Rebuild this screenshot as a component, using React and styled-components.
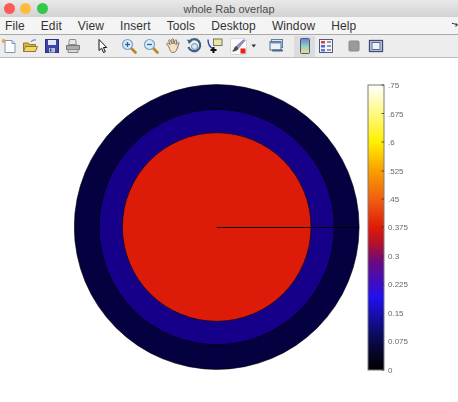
import React from 'react'
import styled, { createGlobalStyle } from 'styled-components';

const GlobalStyle = createGlobalStyle`
  html, body { margin: 0; padding: 0; background: #fff; }
  body { font-family: "Liberation Sans", Arial, sans-serif; }
  * { box-sizing: border-box; }
`;

const Window = styled.div`
  width: 458px;
  height: 402px;
  display: flex;
  flex-direction: column;
  overflow: hidden;
  background: #fff;
`;

const TitleBar = styled.div`
  height: 17px;
  flex: none;
  display: flex;
  align-items: center;
  position: relative;
  background: linear-gradient(#e9e9e9, #d2d2d2);
`;

const Lights = styled.div`
  display: flex;
  gap: 5.5px;
  padding-left: 3.5px;
`;

const Light = styled.span`
  width: 11px;
  height: 11px;
  border-radius: 50%;
  background: ${(p) => p.$color};
`;

const Title = styled.div`
  position: absolute;
  left: 0;
  right: 0;
  text-align: center;
  font-size: 11px;
  color: #4c4c4c;
`;

const MenuBar = styled.div`
  height: 18px;
  flex: none;
  display: flex;
  align-items: center;
  gap: 16px;
  padding-left: 5px;
  position: relative;
  background: #f4f4f4;
  border-bottom: 1px solid #a9a9a9;
  font-size: 12px;
  color: #333;
`;

const MenuItem = styled.span`
  letter-spacing: 0.1px;
`;

const MenuArrow = styled.svg`
  position: absolute;
  right: 0;
  top: 5px;
`;

const Toolbar = styled.div`
  height: 23px;
  flex: none;
  display: flex;
  align-items: center;
  background: #ededed;
  border-bottom: 1px solid #bdbdbd;
`;

const ToolButton = styled.div`
  flex: none;
  width: ${(p) => p.$width || 21}px;
  height: 21px;
  margin-left: ${(p) => p.$ml || 0}px;
  display: flex;
  align-items: center;
  justify-content: center;
  background: ${(p) => (p.$active ? '#dcdcdc' : 'transparent')};
  svg { filter: blur(0.3px); }
`;

const Figure = styled.div`
  flex: 1;
  background: #fff;
`;

const Canvas = styled.svg`
  display: block;
  filter: blur(0.25px);
`;

const Icon = ({ children, w = 16, h = 16 }) => (
    <svg width={w} height={h} viewBox={`0 0 ${w} ${h}`}>{children}</svg>
)

const NewIcon = () => (
    <Icon>
        <path d="M4 2.500h7l3 3v9H4z" fill="#fff" stroke="#7d97b8" />
        <path d="M11 2.500v3h3" fill="#dfe8f2" stroke="#7d97b8" />
        <circle cx="2.600" cy="3" r="2" fill="#f0a050" />
    </Icon>
)

const OpenIcon = () => (
    <Icon>
        <path d="M1.500 5h5l1 1.500h6v7h-12z" fill="#d9b23c" stroke="#8c7a35" />
        <path d="M1.500 13.500l2-5h12l-2 5z" fill="#f4d664" stroke="#8c7a35" />
        <path d="M9 4c1-2 3-2.500 5-2" fill="none" stroke="#6d8fb5" strokeWidth="1.200" />
    </Icon>
)

const SaveIcon = () => (
    <Icon>
        <rect x="1.500" y="1.500" width="13" height="13" fill="#3c46a8" stroke="#2a3080" />
        <rect x="4" y="2" width="8" height="5" fill="#e4e8f4" />
        <rect x="5" y="10" width="6" height="4.500" fill="#b8bdd8" />
        <rect x="6" y="10.500" width="1.500" height="3" fill="#3c46a8" />
    </Icon>
)

const PrintIcon = () => (
    <Icon>
        <path d="M4.500 1.500h6l1 5h-8z" fill="#e8e8e8" stroke="#8d8d8d" />
        <path d="M1.500 7.500h13v4h-13z" fill="#a9adb0" stroke="#777" />
        <path d="M3 11.500h10v3H3z" fill="#d8d8d8" stroke="#888" />
    </Icon>
)

const PointerIcon = () => (
    <Icon>
        <path d="M5 1.500v11l2.600-2.300 1.900 4.300 1.800-.8-1.900-4.200h3.300z" fill="#fff" stroke="#111" strokeLinejoin="round" />
    </Icon>
)

const ZoomIcon = ({ minus }) => (
    <Icon>
        <path d="M9.500 9.500l5 5" stroke="#b98a1e" strokeWidth="2.600" strokeLinecap="round" />
        <circle cx="6.500" cy="6.500" r="5" fill="#d9ecfa" stroke="#7ea2c4" strokeWidth="1.200" />
        <path d="M4 6.500h5" stroke="#2f5fa8" strokeWidth="1.300" />
        {!minus && <path d="M6.500 4v5" stroke="#2f5fa8" strokeWidth="1.300" />}
    </Icon>
)

const HandIcon = () => (
    <Icon>
        <path
            d="M4 9L2 6.500c-.8-1 .5-2 1.500-1.200L5 6.800 3.800 3c-.3-1.300 1.300-1.700 1.800-.5L7 6 6.800 1.800c0-1.300 1.700-1.300 1.800 0L9 6l1-3.500c.4-1.200 1.900-.8 1.700.4L11 6.800l1.500-2c.8-1 2-.2 1.400 1L12 11c-.6 2-1.800 3.500-4 3.500-2 0-3-1.500-4-5.500z"
            fill="#f6e0c0"
            stroke="#7a7468"
            strokeLinejoin="round"
        />
    </Icon>
)

const RotateIcon = () => (
    <Icon>
        <path d="M3.500 3.500A6 6 0 1 1 2.500 9" fill="none" stroke="#3f5f86" strokeWidth="2.200" />
        <path d="M1 1.500l5.500 1-3.500 3.500z" fill="#3f5f86" />
        <circle cx="8.500" cy="8.500" r="3" fill="#dbe5ef" stroke="#6f8aa8" />
    </Icon>
)

const CursorIcon = () => (
    <Icon>
        <rect x="6.500" y="1" width="8.500" height="6.500" fill="#e8e7a8" stroke="#77775a" />
        <path d="M1 1.500c0 5 2 8 5.500 9.500" fill="none" stroke="#2430b8" strokeWidth="1.300" />
        <path d="M6.500 9v6M3.500 12h6" stroke="#111" strokeWidth="2" />
    </Icon>
)

const BrushIcon = () => (
    <Icon w={17} h={17}>
        <rect x="0.500" y="0.500" width="16" height="16" rx="1.500" fill="#fbfbfb" stroke="#d8d8d8" />
        <path d="M14 1.500L7 7.500l2 2 6-7z" fill="#9a93c8" stroke="#57528a" strokeWidth="0.600" />
        <path d="M6.500 8c-2.500.5-2 3-4.500 5.500 3 .5 6-1 6.800-3.500z" fill="#4d4d4d" />
        <rect x="10.500" y="10.500" width="5" height="5" fill="#ee1c1c" />
    </Icon>
)

const ArrowIcon = () => (
    <Icon w={6} h={4}>
        <path d="M.5 .5h4.500L2.750 3.500z" fill="#333" />
    </Icon>
)

const LinkIcon = () => (
    <Icon>
        <rect x="2.500" y="1.500" width="11" height="8" fill="#dfe6ee" stroke="#5f7da0" />
        <rect x="1" y="3.500" width="11" height="8.500" fill="#eef2f6" stroke="#4f6f95" />
        <rect x="1" y="3.500" width="11" height="2" fill="#6c8db3" />
        <path d="M4 12.500h4M9 12.500h4" stroke="#46678e" strokeWidth="2.200" strokeLinecap="round" />
    </Icon>
)

const ColorbarIcon = () => (
    <Icon>
        <defs>
            <linearGradient id="barIcon" x1="0" y1="0" x2="0" y2="1">
                <stop offset="0" stopColor="#6f7bd8" />
                <stop offset="0.500" stopColor="#8fd0c0" />
                <stop offset="1" stopColor="#f4e080" />
            </linearGradient>
        </defs>
        <rect x="3.500" y="0.500" width="9" height="15" rx="1" fill="url(#barIcon)" stroke="#49597c" />
    </Icon>
)

const LegendIcon = () => (
    <Icon>
        <rect x="1.500" y="1.500" width="13" height="13" fill="#f6f6fa" stroke="#4d5a80" />
        <rect x="3" y="3" width="4" height="2.500" fill="#e0383c" />
        <rect x="3" y="7" width="4" height="2.500" fill="#4f5fe0" />
        <rect x="3" y="11" width="4" height="2.500" fill="#5f6fe8" />
        <path d="M9 4h4M9 8h4M9 12h4" stroke="#333c5a" />
    </Icon>
)

const HideIcon = () => (
    <Icon>
        <rect x="3" y="3" width="10" height="10" rx="1" fill="#9a9a9a" stroke="#8a8a8a" />
    </Icon>
)

const ShowIcon = () => (
    <Icon>
        <rect x="1.500" y="2.500" width="13" height="11" fill="#c7d0ea" stroke="#3d4c74" strokeWidth="1.300" />
        <rect x="4" y="4.500" width="8" height="7" fill="#eef1f8" stroke="#5a6a90" />
    </Icon>
)

const menus = ['File', 'Edit', 'View', 'Insert', 'Tools', 'Desktop', 'Window', 'Help'];

const tools = [
    { icon: <NewIcon />, ml: -2 },
    { icon: <OpenIcon /> },
    { icon: <SaveIcon />, ml: 1 },
    { icon: <PrintIcon /> },
    { icon: <PointerIcon />, ml: 8.5 },
    { icon: <ZoomIcon />, ml: 6 },
    { icon: <ZoomIcon minus />, ml: 1 },
    { icon: <HandIcon />, ml: 0.5 },
    { icon: <RotateIcon />, ml: 0.5 },
    { icon: <CursorIcon /> },
    { icon: <BrushIcon />, ml: 2 },
    { icon: <ArrowIcon />, ml: 2, width: 6 },
    { icon: <LinkIcon />, ml: 9.5 },
    { icon: <ColorbarIcon />, ml: 7, active: true },
    { icon: <LegendIcon />, ml: 0.5 },
    { icon: <HideIcon />, ml: 7 },
    { icon: <ShowIcon />, ml: 0.5 },
];

// y values are page rows minus the 58px of chrome above the figure
const ticks = [
    { label: '.75', y: 27 },
    { label: '.675', y: 55.5 },
    { label: '.6', y: 84 },
    { label: '.525', y: 113 },
    { label: '.45', y: 141 },
    { label: '0.375', y: 169 },
    { label: '0.3', y: 198 },
    { label: '0.225', y: 226 },
    { label: '0.15', y: 255 },
    { label: '0.075', y: 283 },
    { label: '0', y: 312 },
];

function Plot() {
    return (
        <Canvas width="458" height="344" viewBox="0 0 458 344">
            <defs>
                <linearGradient id="hot" x1="0" y1="0" x2="0" y2="1">
                    <stop offset="0" stopColor="#ffffff" />
                    <stop offset="0.2" stopColor="#fff000" />
                    <stop offset="0.3" stopColor="#f8a000" />
                    <stop offset="0.4" stopColor="#f06010" />
                    <stop offset="0.5" stopColor="#e01a08" />
                    <stop offset="0.56" stopColor="#b01030" />
                    <stop offset="0.62" stopColor="#6a0a80" />
                    <stop offset="0.745" stopColor="#2010f0" />
                    <stop offset="0.89" stopColor="#0a0a50" />
                    <stop offset="1" stopColor="#000000" />
                </linearGradient>
            </defs>
            <circle cx="216.7" cy="169" r="142.400" fill="#05003f" stroke="#000" strokeWidth="0.6" />
            <circle cx="216.7" cy="169" r="117.600" fill="#16008a" stroke="#000" strokeWidth="0.6" />
            <circle cx="216.7" cy="169" r="94.300" fill="#dc1c08" stroke="#000" strokeWidth="0.6" />
            <line x1="216.7" y1="169.5" x2="359" y2="169.5" stroke="#000" strokeWidth="0.9" />
            <rect x="368" y="27" width="16" height="285" fill="url(#hot)" stroke="#7a7a7a" strokeWidth="1" />
            {ticks.map((t) => (
                <g key={t.label}>
                    <line x1="381.5" y1={t.y} x2="384" y2={t.y} stroke="#333" strokeWidth="0.8" />
                    <text x="388" y={t.y + 3} fontSize="8" fill="#666" fontFamily="Liberation Sans, Arial, sans-serif">{t.label}</text>
                </g>
            ))}
        </Canvas>
    )
}

function App() {
    return (
        <Window>
            <GlobalStyle />
            <TitleBar>
                <Lights>
                    <Light $color="#fc5b57" />
                    <Light $color="#fdbc40" />
                    <Light $color="#34c84a" />
                </Lights>
                <Title>whole Rab overlap</Title>
            </TitleBar>
            <MenuBar>
                {menus.map((m) => <MenuItem key={m}>{m}</MenuItem>)}
                <MenuArrow width="6" height="6" viewBox="0 0 6 6">
                    <path d="M0 1.500c2-1 3 2 5 1.500M3.500 1l2 2-2 1.500" fill="none" stroke="#222" strokeWidth="1" />
                </MenuArrow>
            </MenuBar>
            <Toolbar>
                {tools.map((t, i) => (
                    <ToolButton key={i} $ml={t.ml} $width={t.width} $active={t.active}>{t.icon}</ToolButton>
                ))}
            </Toolbar>
            <Figure>
                <Plot />
            </Figure>
        </Window>
    )
}

export default App
